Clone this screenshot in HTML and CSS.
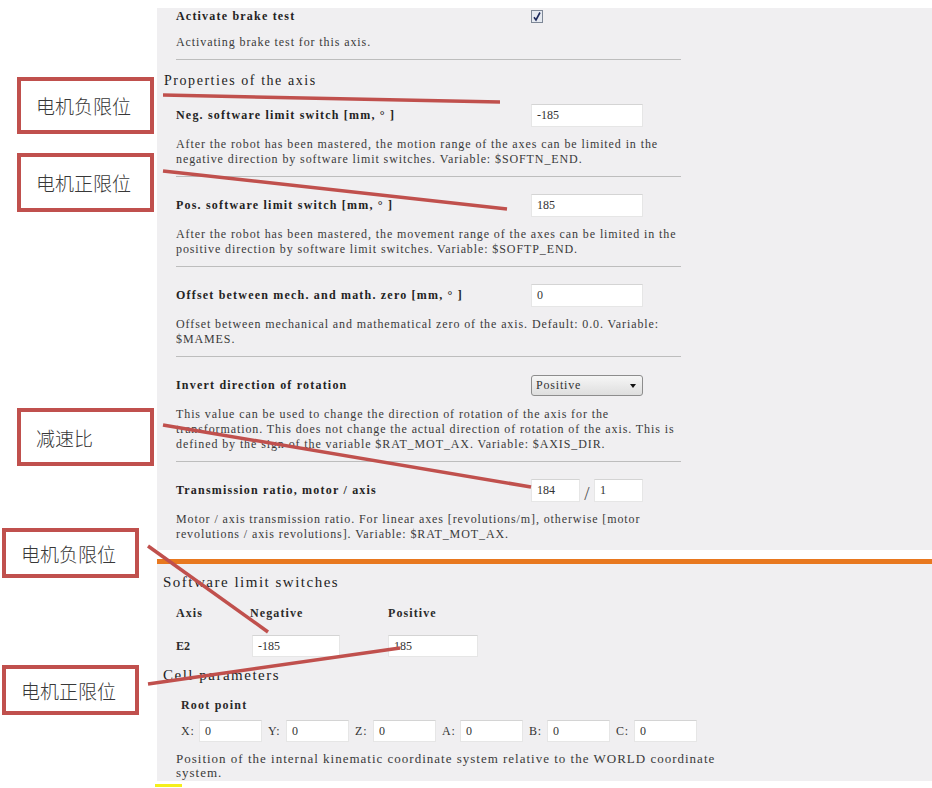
FILE: index.html
```html
<!DOCTYPE html>
<html lang="en">
<head>
<meta charset="utf-8">
<title>Axis configuration</title>
<link rel="stylesheet" href="styles.css">
</head>
<body>
<div class="page">
  <section class="panel panel-top">
    <div class="item item-first">
      <div class="row row-short">
        <span class="label">Activate brake test</span>
        <span class="checkbox"><svg width="12" height="13" viewBox="0 0 12 13"><rect x="0.5" y="0.5" width="11" height="12" fill="#e6eaf1" stroke="#7d8796"/><path d="M3 7.2 L5 10 L9 2.5" fill="none" stroke="#1e2a5c" stroke-width="1.6"/></svg></span>
      </div>
      <p class="desc">Activating brake test for this axis.</p>
    </div>

    <h2 class="heading">Properties of the axis</h2>

    <div class="item">
      <div class="row">
        <span class="label">Neg. software limit switch [mm, ° ]</span>
        <span class="field field-wide">-185</span>
      </div>
      <p class="desc">After the robot has been mastered, the motion range of the axes can be limited in the<br>negative direction by software limit switches. Variable: $SOFTN_END.</p>
    </div>

    <div class="item">
      <div class="row">
        <span class="label">Pos. software limit switch [mm, ° ]</span>
        <span class="field field-wide">185</span>
      </div>
      <p class="desc">After the robot has been mastered, the movement range of the axes can be limited in the<br>positive direction by software limit switches. Variable: $SOFTP_END.</p>
    </div>

    <div class="item">
      <div class="row">
        <span class="label">Offset between mech. and math. zero [mm, ° ]</span>
        <span class="field field-wide">0</span>
      </div>
      <p class="desc">Offset between mechanical and mathematical zero of the axis. Default: 0.0. Variable:<br>$MAMES.</p>
    </div>

    <div class="item">
      <div class="row">
        <span class="label">Invert direction of rotation</span>
        <span class="select"><span>Positive</span><span class="caret"></span></span>
      </div>
      <p class="desc">This value can be used to change the direction of rotation of the axis for the<br>transformation. This does not change the actual direction of rotation of the axis. This is<br>defined by the sign of the variable $RAT_MOT_AX. Variable: $AXIS_DIR.</p>
    </div>

    <div class="item item-last">
      <div class="row">
        <span class="label">Transmission ratio, motor / axis</span>
        <span class="ratio"><span class="field field-half">184</span><span class="slash">/</span><span class="field field-half">1</span></span>
      </div>
      <p class="desc">Motor / axis transmission ratio. For linear axes [revolutions/m], otherwise [motor<br>revolutions / axis revolutions]. Variable: $RAT_MOT_AX.</p>
    </div>
  </section>

  <div class="orange-rule"></div>

  <section class="panel panel-bottom">
    <h2 class="heading heading-bottom">Software limit switches</h2>
    <div class="limits">
      <span class="col-head">Axis</span>
      <span class="col-head">Negative</span>
      <span class="col-head">Positive</span>
      <span class="axis-name">E2</span>
      <span class="field field-limit">-185</span>
      <span class="field field-limit field-limit-pos">185</span>
    </div>
    <h2 class="heading heading-cell">Cell parameters</h2>
    <div class="root-title">Root point</div>
    <div class="coords">
      <span class="coord"><span class="coord-label">X:</span><span class="field field-coord">0</span></span>
      <span class="coord"><span class="coord-label">Y:</span><span class="field field-coord">0</span></span>
      <span class="coord"><span class="coord-label">Z:</span><span class="field field-coord">0</span></span>
      <span class="coord"><span class="coord-label">A:</span><span class="field field-coord">0</span></span>
      <span class="coord"><span class="coord-label">B:</span><span class="field field-coord">0</span></span>
      <span class="coord"><span class="coord-label">C:</span><span class="field field-coord">0</span></span>
    </div>
    <p class="desc desc-bottom">Position of the internal kinematic coordinate system relative to the WORLD coordinate<br>system.</p>
  </section>
  <div class="yellow-mark"></div>
</div>

<div class="callout callout-1">电机负限位</div>
<div class="callout callout-2">电机正限位</div>
<div class="callout callout-3">减速比</div>
<div class="callout callout-4">电机负限位</div>
<div class="callout callout-5">电机正限位</div>

<svg class="leaders" width="932" height="788" viewBox="0 0 932 788">
  <g stroke="#c0504d" stroke-width="3.5" fill="none">
    <line x1="163" y1="95" x2="500" y2="102"/>
    <line x1="163" y1="171" x2="507" y2="209"/>
    <line x1="163" y1="425" x2="531" y2="487"/>
    <line x1="148" y1="546" x2="268" y2="632"/>
    <line x1="148" y1="684" x2="400" y2="648"/>
  </g>
</svg>
</body>
</html>
```
FILE: styles.css
```css
body {
  margin: 0;
  background: #ffffff;
  font-family: "Liberation Serif", "Times New Roman", serif;
  color: #262626;
}

.page {
  padding: 8px 0 0 157px;
}

.panel {
  background: #f0eff1;
}

.panel-top {
  padding: 0 0 8px 7px;
}

.heading {
  margin: 0 0 -4px 0;
  padding-top: 11px;
  font-size: 14px;
  line-height: 20px;
  font-weight: normal;
  letter-spacing: 1.55px;
  color: #1e1e1e;
}

.item {
  margin-left: 12px;
  width: 505px;
  padding: 17px 0 9px;
  border-bottom: 1px solid #bdbdbd;
}

.item-first {
  padding-top: 0;
}

.item-last {
  border-bottom: none;
  padding-bottom: 0;
}

.row {
  display: grid;
  grid-template-columns: 355px auto;
  align-items: center;
  min-height: 23px;
}

.row-short {
  min-height: 17px;
}

.label {
  font-size: 12px;
  font-weight: bold;
  letter-spacing: 1.2px;
  color: #232323;
  white-space: nowrap;
}

.desc {
  margin: 10px 0 0;
  font-size: 12px;
  line-height: 15px;
  letter-spacing: 0.9px;
  color: #3a3a3a;
  white-space: nowrap;
}

.checkbox {
  display: flex;
  align-items: center;
  height: 17px;
}

.checkbox svg {
  display: block;
}

.field {
  display: flex;
  align-items: center;
  box-sizing: border-box;
  height: 23px;
  padding-left: 5px;
  background: #ffffff;
  border: 1px solid #e6e6e6;
  border-top-color: #d4d4d4;
  font-size: 12px;
  color: #333;
}

.field-wide {
  width: 112px;
}

.ratio {
  display: flex;
  align-items: center;
}

.field-half {
  width: 49px;
}

.slash {
  width: 14px;
  text-align: center;
  font-size: 19px;
  line-height: 23px;
  color: #555;
  transform: translateY(3px);
}

.select {
  display: flex;
  align-items: center;
  justify-content: space-between;
  box-sizing: border-box;
  width: 112px;
  height: 21px;
  padding: 0 6px 0 4px;
  border: 1px solid #8d8d8d;
  border-radius: 3px;
  background: linear-gradient(#f6f6f6, #dedede);
  font-size: 12px;
  letter-spacing: 0.8px;
  color: #333;
}

.caret {
  width: 0;
  height: 0;
  border-left: 3.5px solid transparent;
  border-right: 3.5px solid transparent;
  border-top: 4px solid #111;
}

.orange-rule {
  height: 5px;
  margin-top: 9px;
  background: #e8781f;
}

.panel-bottom {
  padding: 0 0 3px 6px;
  height: 214px;
}

.heading-bottom {
  margin: 0;
  padding-top: 8px;
  font-size: 15px;
  letter-spacing: 1.5px;
}

.limits {
  display: grid;
  grid-template-columns: 74px 138px auto;
  grid-template-rows: 20px 22px;
  row-gap: 12px;
  align-items: center;
  margin: 11px 0 0 13px;
  font-size: 12px;
}

.col-head {
  font-weight: bold;
  letter-spacing: 1.1px;
  color: #2a2a2a;
}

.axis-name {
  font-weight: bold;
  color: #2a2a2a;
}

.field-limit {
  width: 88px;
  height: 22px;
  margin-left: 2px;
}

.field-limit-pos {
  width: 90px;
  margin-left: 0;
}

.heading-cell {
  margin: 0;
  padding-top: 8px;
  font-size: 15px;
  letter-spacing: 1.5px;
}

.root-title {
  margin: 10px 0 0 18px;
  font-size: 12px;
  line-height: 20px;
  font-weight: bold;
  letter-spacing: 1.2px;
  color: #2a2a2a;
}

.coords {
  display: flex;
  gap: 6px;
  margin: 5px 0 0 18px;
}

.coord {
  display: flex;
  align-items: center;
}

.coord-label {
  width: 18px;
  font-size: 12px;
  letter-spacing: 0.8px;
  color: #333;
}

.field-coord {
  width: 63px;
  height: 22px;
}

.desc-bottom {
  margin: 10px 0 0 13px;
  font-size: 13px;
  line-height: 14px;
  letter-spacing: 1px;
}

.yellow-mark {
  width: 27px;
  height: 3px;
  margin: 3px 0 0 -2px;
  background: #f5ef1c;
}

.callout {
  position: absolute;
  box-sizing: border-box;
  width: 137px;
  border: 4px solid #c0504d;
  background: #ffffff;
  display: flex;
  align-items: center;
  font-family: "Noto Sans CJK SC", "Noto Sans", sans-serif;
  font-size: 19px;
  font-weight: 300;
  color: #383838;
  padding-left: 15px;
}

.callout-1 { left: 17px; top: 77px; height: 57px; }
.callout-2 { left: 17px; top: 153px; height: 59px; }
.callout-3 { left: 17px; top: 408px; height: 58px; }
.callout-4 { left: 2px; top: 528px; height: 50px; }
.callout-5 { left: 2px; top: 665px; height: 50px; }

.leaders {
  position: absolute;
  left: 0;
  top: 0;
  pointer-events: none;
}
```
